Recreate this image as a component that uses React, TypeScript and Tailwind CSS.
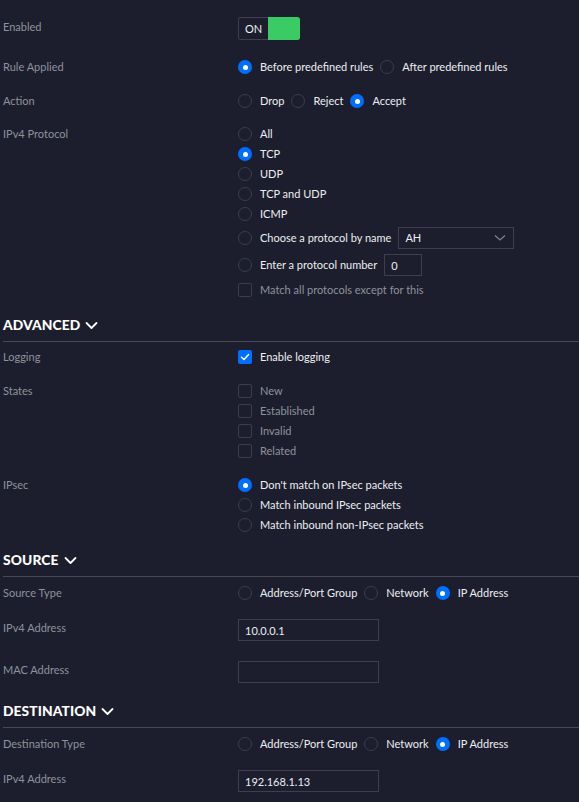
import React from 'react'

function Radio({ checked = false }: { checked?: boolean }) {
  if (checked) {
    return (
      <span className="flex h-[14px] w-[14px] shrink-0 items-center justify-center rounded-full bg-[#006fff]">
        <span className="h-[5px] w-[5px] rounded-full bg-white" />
      </span>
    )
  }
  return <span className="h-[14px] w-[14px] shrink-0 rounded-full border border-[#3a3e4c]" />
}

function Check({ checked = false }: { checked?: boolean }) {
  if (checked) {
    return (
      <span className="flex h-[14px] w-[14px] shrink-0 items-center justify-center rounded-[2px] bg-[#006fff]">
        <svg width="10" height="10" viewBox="0 0 10 10" fill="none">
          <path d="M1.5 5.2 L4 7.5 L8.6 2.6" stroke="white" strokeWidth="1.4" strokeLinecap="round" strokeLinejoin="round" />
        </svg>
      </span>
    )
  }
  return <span className="h-[14px] w-[14px] shrink-0 rounded-[2px] border border-[#3a3e4c]" />
}

function Option({ label, checked, muted, box }: { label: string; checked?: boolean; muted?: boolean; box?: boolean }) {
  return (
    <span className="flex items-center">
      {box ? <Check checked={checked} /> : <Radio checked={checked} />}
      <span className={`mb-px ml-2 mr-[7px] ${muted ? 'text-[#8f929b]' : 'text-[#eceef1]'}`}>{label}</span>
    </span>
  )
}

function Row({ label, className = '', children }: { label: string; className?: string; children: React.ReactNode }) {
  return (
    <div className={`flex ${className}`}>
      <div className="flex h-5 w-[235px] shrink-0 items-center pb-[2px] text-[#8f929b]">{label}</div>
      <div className="flex flex-col">{children}</div>
    </div>
  )
}

function Line({ children, className = '' }: { children: React.ReactNode; className?: string }) {
  return <div className={`flex h-5 items-center ${className}`}>{children}</div>
}

function Heading({ title, className = '' }: { title: string; className?: string }) {
  return (
    <div className={`flex items-center gap-[5px] border-b border-[#464955] pb-[7px] ${className}`}>
      <span className="h-[18px] text-[13.8px] font-black leading-[18px] tracking-[0.1px] text-white">{title}</span>
      <svg width="13" height="9" viewBox="0 0 13 9" fill="none" className="mt-[1px]">
        <path d="M1.5 2 L6.5 7 L11.5 2" stroke="white" strokeWidth="1.8" strokeLinecap="round" strokeLinejoin="round" />
      </svg>
    </div>
  )
}

function TextBox({ value = '' }: { value?: string }) {
  return (
    <div className="flex h-[22px] w-[141px] items-center border border-[#3d404c] px-[6px] text-[#eceef1]">{value}</div>
  )
}

function InputRow({ label, value, className = '' }: { label: string; value?: string; className?: string }) {
  return (
    <div className={`flex items-center ${className}`}>
      <div className="mb-[5px] w-[235px] shrink-0 text-[#8f929b]">{label}</div>
      <TextBox value={value} />
    </div>
  )
}

export default function App() {
  return (
    <main
      className="min-h-screen bg-[#1c1e2d] pl-[3px] pt-[17px] text-[11px] leading-none"
      style={{ fontFamily: 'Lato, "Noto Sans", sans-serif' }}
    >
      <div className="flex items-center">
        <div className="mb-[5px] w-[235px] shrink-0 text-[#8f929b]">Enabled</div>
        <div className="flex h-[23px] w-[62px] overflow-hidden rounded-[2px]">
          <span className="flex w-[30px] items-center justify-center rounded-l-[2px] border border-r-0 border-[#3d404c] text-[11px] text-[#eceef1]">
            ON
          </span>
          <span className="flex-1 rounded-r-[2px] bg-[#3bcb65]" />
        </div>
      </div>

      <Row label="Rule Applied" className="mt-[17px]">
        <Line>
          <Option label="Before predefined rules" checked />
          <Option label="After predefined rules" />
        </Line>
      </Row>

      <Row label="Action" className="mt-[14px]">
        <Line>
          <Option label="Drop" />
          <Option label="Reject" />
          <Option label="Accept" checked />
        </Line>
      </Row>

      <Row label="IPv4 Protocol" className="mt-[13px]">
        <Line><Option label="All" /></Line>
        <Line><Option label="TCP" checked /></Line>
        <Line><Option label="UDP" /></Line>
        <Line><Option label="TCP and UDP" /></Line>
        <Line><Option label="ICMP" /></Line>
        <div className="flex h-[27px] items-center">
          <Option label="Choose a protocol by name" />
          <div className="flex h-[22px] w-[116px] items-center justify-between border border-[#3d404c] pl-[6px] pr-[7px] text-[#eceef1]">
            <span>AH</span>
            <svg width="12" height="8" viewBox="0 0 12 8" fill="none">
              <path d="M1 1.5 L6 6 L11 1.5" stroke="#7d808a" strokeWidth="1.3" />
            </svg>
          </div>
        </div>
        <div className="flex h-[28px] items-center">
          <Option label="Enter a protocol number" />
          <div className="flex h-[22px] w-[38px] items-center border border-[#3d404c] px-[6px] text-[#eceef1]">0</div>
        </div>
        <Line className="mt-[1px]"><Option label="Match all protocols except for this" box muted /></Line>
      </Row>

      <Heading title="ADVANCED" className="mt-[16px]" />

      <Row label="Logging" className="mt-[5px]">
        <Line><Option label="Enable logging" box checked /></Line>
      </Row>

      <Row label="States" className="mt-[14px]">
        <Line><Option label="New" box muted /></Line>
        <Line><Option label="Established" box muted /></Line>
        <Line><Option label="Invalid" box muted /></Line>
        <Line><Option label="Related" box muted /></Line>
      </Row>

      <Row label="IPsec" className="mt-[14px]">
        <Line><Option label="Don't match on IPsec packets" checked /></Line>
        <Line><Option label="Match inbound IPsec packets" /></Line>
        <Line><Option label="Match inbound non-IPsec packets" /></Line>
      </Row>

      <Heading title="SOURCE" className="mt-[16px]" />

      <Row label="Source Type" className="mt-[6px]">
        <Line>
          <Option label="Address/Port Group" />
          <Option label="Network" />
          <Option label="IP Address" checked />
        </Line>
      </Row>

      <InputRow label="IPv4 Address" value="10.0.0.1" className="mt-[16px]" />
      <InputRow label="MAC Address" className="mt-[20px]" />

      <Heading title="DESTINATION" className="mt-[19px]" />

      <Row label="Destination Type" className="mt-[6px]">
        <Line>
          <Option label="Address/Port Group" />
          <Option label="Network" />
          <Option label="IP Address" checked />
        </Line>
      </Row>

      <InputRow label="IPv4 Address" value="192.168.1.13" className="mt-[16px] pb-[10px]" />
    </main>
  )
}
